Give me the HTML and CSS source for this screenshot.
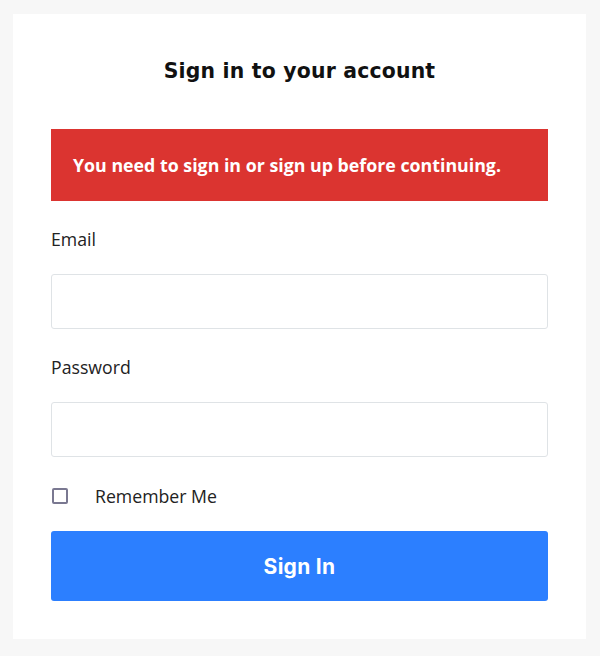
FILE: index.html
```html
<!DOCTYPE html>
<html lang="en">
<head>
<meta charset="utf-8">
<title>Sign in</title>
<link rel="stylesheet" href="styles.css">
</head>
<body>
<main class="card">
  <h1 class="title">Sign in to your account</h1>
  <div class="alert">You need to sign in or sign up before continuing.</div>
  <form class="form">
    <div class="field">
      <label class="label" for="email">Email</label>
      <input class="input" id="email" type="email">
    </div>
    <div class="field">
      <label class="label" for="password">Password</label>
      <input class="input" id="password" type="password">
    </div>
    <label class="remember">
      <span class="checkbox"></span>
      <span class="remember-text">Remember Me</span>
    </label>
    <button class="button" type="button">Sign In</button>
  </form>
</main>
</body>
</html>
```
FILE: styles.css
```css
html, body {
  margin: 0;
  padding: 0;
  background: #f7f7f7;
}
body {
  font-family: "Open Sans", "Liberation Sans", sans-serif;
  color: #222222;
}
.card {
  background: #ffffff;
  margin: 14px 14px 17px 13px;
  padding: 45px 38px 38px 38px;
}
.title {
  margin: 0;
  font-family: "DejaVu Sans", Inter, sans-serif;
  font-weight: 700;
  font-size: 20.4px;
  line-height: 24px;
  text-align: center;
  color: #111111;
  letter-spacing: 0.2px;
}
.alert {
  margin-top: 46px;
  background: #db3430;
  color: #ffffff;
  font-weight: 700;
  font-size: 17.8px;
  line-height: 28px;
  padding: 22px 22px;
}
.form {
  display: flex;
  flex-direction: column;
  margin-top: 25px;
}
.field {
  display: flex;
  flex-direction: column;
  margin-bottom: 25px;
}
.label {
  font-size: 17.7px;
  line-height: 26px;
  margin-bottom: 22px;
}
.input {
  box-sizing: border-box;
  height: 55px;
  border: 1px solid #dfe3e6;
  border-radius: 3px;
  background: #ffffff;
  margin: 0;
  padding: 0 12px;
}
.remember {
  display: flex;
  align-items: center;
  height: 26px;
  margin-top: 1px;
  font-size: 17.7px;
  line-height: 26px;
}
.checkbox {
  box-sizing: border-box;
  width: 16px;
  height: 16px;
  margin-left: 1px;
  border: 2px solid #7a7891;
  border-radius: 2px;
}
.remember-text {
  margin-left: 27px;
}
.button {
  margin-top: 22px;
  height: 70px;
  border: 0;
  border-radius: 3px;
  background: #2c7fff;
  color: #ffffff;
  font-family: Inter, "Open Sans", sans-serif;
  font-weight: 700;
  font-size: 21px;
  letter-spacing: 0.3px;
}
```
